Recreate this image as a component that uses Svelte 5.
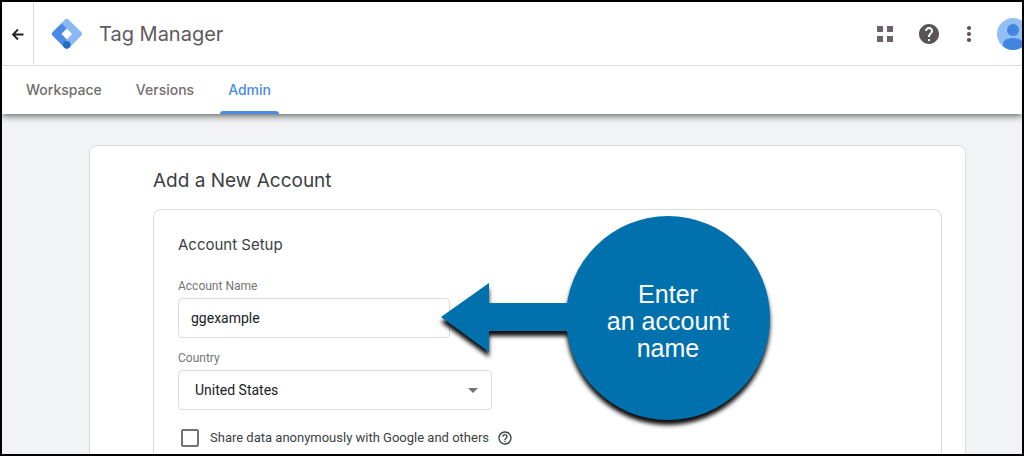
<script lang="ts">
  const tabs = ['Workspace', 'Versions', 'Admin'];
  const countries = ['United States', 'Canada', 'United Kingdom'];

  let activeTab = $state('Admin');
  let accountName = $state('ggexample');
  let country = $state('United States');
  let shareData = $state(false);
</script>

<div class="app">
  <header class="top-bar">
    <button class="back" aria-label="Back">
      <svg width="16" height="16" viewBox="0 0 16 16" fill="none" stroke="#202124" stroke-width="1.8">
        <path d="M13.5 8.5H3.5M8 3.5L3 8.5L8 13.5" />
      </svg>
    </button>
    <svg class="logo" width="32" height="32" viewBox="0 0 32 32" aria-hidden="true">
      <path fill="#4a8ae6" d="M13.6 2.2L1.9 13.8a3 3 0 0 0 0 4.3L13.6 29.8a3 3 0 0 0 4.3 0L29.6 18.1a3 3 0 0 0 0-4.3L17.9 2.2a3 3 0 0 0-4.3 0Z" />
      <path fill="#8ab8f2" d="M17.9 2.2L29.6 13.8a3 3 0 0 1 0 4.3L20 27.8L14.8 22.4L21.2 16L10.5 5.3L13.6 2.2a3 3 0 0 1 4.3 0Z" />
      <path fill="#fff" d="M15.8 10.6L21.2 16L15.8 21.4L10.4 16Z" />
      <circle cx="15.8" cy="26.8" r="3.8" fill="#246fc0" />
    </svg>
    <h1>Tag Manager</h1>
    <div class="actions">
      <button aria-label="Apps">
        <svg width="24" height="24" viewBox="0 0 24 24" fill="#6b6367">
          <path d="M4 4h6v6H4zM14 4h6v6h-6zM4 14h6v6H4zM14 14h6v6h-6z" />
        </svg>
      </button>
      <button class="help" aria-label="Help">
        <svg width="24" height="24" viewBox="0 0 24 24" fill="#5a5358">
          <path d="M12 2C6.48 2 2 6.48 2 12s4.48 10 10 10 10-4.48 10-10S17.52 2 12 2zm1 17h-2v-2h2v2zm2.07-7.75l-.9.92C13.45 12.9 13 13.5 13 15h-2v-.5c0-1.1.45-2.1 1.17-2.83l1.24-1.26c.37-.36.59-.86.59-1.41 0-1.1-.9-2-2-2s-2 .9-2 2H8c0-2.21 1.79-4 4-4s4 1.79 4 4c0 .88-.36 1.68-.93 2.25z" />
        </svg>
      </button>
      <button aria-label="More">
        <svg width="24" height="24" viewBox="0 0 24 24" fill="#5a5358">
          <circle cx="12" cy="6" r="2.1" />
          <circle cx="12" cy="12" r="2.1" />
          <circle cx="12" cy="18" r="2.1" />
        </svg>
      </button>
      <button class="avatar" aria-label="Account">
        <svg width="32" height="32" viewBox="0 0 32 32">
          <clipPath id="avatar-clip"><circle cx="16" cy="16" r="16" /></clipPath>
          <g clip-path="url(#avatar-clip)">
            <rect width="32" height="32" fill="#92bff4" />
            <circle cx="16" cy="12" r="6" fill="#4285e0" />
            <path fill="#4285e0" d="M6 32v-6c0-4 5-6 10-6s10 2 10 6v6z" />
          </g>
        </svg>
      </button>
    </div>
  </header>

  <nav class="tabs">
    {#each tabs as tab}
      <button class="tab" class:active={tab === activeTab} onclick={() => (activeTab = tab)}>{tab}</button>
    {/each}
  </nav>

  <main>
    <section class="card">
      <h2>Add a New Account</h2>
      <div class="panel">
        <h3>Account Setup</h3>

        <label class="field-label" for="account-name">Account Name</label>
        <div class="field">
          <input id="account-name" class="text-input" type="text" bind:value={accountName} />
          <div class="callout">
            <svg width="329" height="204" viewBox="0 0 329 204" fill="#0071ad" aria-hidden="true">
              <circle cx="227" cy="102" r="102" />
              <path d="M0 101L48 67V87H130V115H48V136Z" />
            </svg>
            <p>Enter<br />an account<br />name</p>
          </div>
        </div>

        <label class="field-label" for="country">Country</label>
        <div class="field select">
          <select id="country" bind:value={country}>
            {#each countries as name}
              <option value={name}>{name}</option>
            {/each}
          </select>
          <svg class="caret" width="10" height="5" viewBox="0 0 10 5" aria-hidden="true">
            <path fill="#757075" d="M0 0H10L5 5Z" />
          </svg>
        </div>

        <div class="share">
          <input id="share-data" type="checkbox" bind:checked={shareData} />
          <label for="share-data">Share data anonymously with Google and others</label>
          <svg width="16" height="16" viewBox="0 0 24 24" fill="#3c4043" aria-hidden="true">
            <path d="M11 18h2v-2h-2v2zm1-16C6.48 2 2 6.48 2 12s4.48 10 10 10 10-4.48 10-10S17.52 2 12 2zm0 18c-4.41 0-8-3.59-8-8s3.59-8 8-8 8 3.59 8 8-3.59 8-8 8zm0-14c-2.21 0-4 1.79-4 4h2c0-1.1.9-2 2-2s2 .9 2 2c0 2-3 1.75-3 5h2c0-2.25 3-2.5 3-5 0-2.21-1.79-4-4-4z" />
          </svg>
        </div>
      </div>
    </section>
  </main>
</div>

<style>
  :global(body) {
    background: #f1f3f4;
  }

  .app {
    box-sizing: border-box;
    height: 100vh;
    display: flex;
    flex-direction: column;
    overflow: hidden;
    border: 2px solid #000;
    background: #f1f3f4;
    color: #3c4043;
    font-family: Roboto, sans-serif;
  }

  button {
    padding: 0;
    border: none;
    background: none;
    cursor: pointer;
  }

  svg {
    display: block;
    flex-shrink: 0;
  }

  h1, h2, h3 {
    margin: 0;
    font-family: Inter, sans-serif;
    font-weight: 400;
  }

  /* Header */
  .top-bar {
    position: relative;
    z-index: 2;
    display: flex;
    align-items: center;
    flex-shrink: 0;
    height: 63px;
    border-bottom: 1px solid #dadce0;
    background: #fff;
  }

  .back {
    display: flex;
    align-items: center;
    justify-content: center;
    width: 32px;
    height: 100%;
    border-right: 1px solid #dadce0;
  }

  .logo {
    margin: 0 16px 0 17px;
  }

  h1 {
    color: #5f5a5f;
    font-size: 20px;
    line-height: 28px;
  }

  .actions {
    display: flex;
    align-items: center;
    gap: 16px;
    margin-left: auto;
    margin-right: -7px;
  }

  .help {
    margin-left: 4px;
  }

  /* Tabs */
  .tabs {
    position: relative;
    z-index: 1;
    display: flex;
    flex-shrink: 0;
    gap: 18px;
    height: 48px;
    padding: 0 16px;
    background: #fff;
    box-shadow: 0 2px 7px rgba(0, 0, 0, 0.6);
  }

  .tab {
    position: relative;
    padding: 0 8px;
    color: #736d6d;
    font: 500 14px/20px Inter, sans-serif;
  }

  .tab.active {
    color: #4a8be4;
  }

  .tab.active::after {
    content: "";
    position: absolute;
    right: 0;
    bottom: 0;
    left: 0;
    height: 3px;
    border-radius: 3px 3px 0 0;
    background: #4a8be4;
  }

  /* Content */
  main {
    flex: 1;
    min-height: 0;
    padding: 31px 56px 0 87px;
  }

  .card {
    min-height: 400px;
    padding: 22px 23px 0 63px;
    border: 1px solid #dadce0;
    border-radius: 8px;
    background: #fff;
  }

  h2 {
    font-size: 19px;
    line-height: 26px;
  }

  .panel {
    margin-top: 15px;
    padding: 24px;
    border: 1px solid #dadce0;
    border-radius: 8px;
  }

  h3 {
    margin-bottom: 22px;
    font-size: 15px;
    line-height: 22px;
  }

  .field-label {
    display: block;
    margin-bottom: 4px;
    color: #757575;
    font-size: 12px;
    line-height: 16px;
  }

  .field {
    position: relative;
    width: 272px;
    margin-bottom: 12px;
  }

  .field.select {
    width: 314px;
    margin-bottom: 17px;
  }

  .text-input, select {
    box-sizing: border-box;
    display: block;
    width: 100%;
    height: 40px;
    border: 1px solid #dadce0;
    border-radius: 4px;
    background: #fff;
    color: #202124;
    font: 14px Roboto, sans-serif;
  }

  .text-input {
    padding: 0 12px;
  }

  select {
    padding: 0 32px 0 16px;
    appearance: none;
  }

  .caret {
    position: absolute;
    top: 18px;
    right: 14px;
    pointer-events: none;
  }

  .share {
    display: flex;
    align-items: center;
    font-size: 13px;
    line-height: 22px;
  }

  .share input {
    box-sizing: border-box;
    width: 18px;
    height: 18px;
    margin: 0 11px 0 3px;
    border: 2px solid #757078;
    border-radius: 2px;
    appearance: none;
  }

  .share input:checked {
    background: #4a8be4;
  }

  .share label {
    margin-right: 8px;
  }

  /* Callout pointing at the account name */
  .callout {
    position: absolute;
    z-index: 1;
    top: -82px;
    left: 263px;
    width: 329px;
    height: 204px;
  }

  .callout svg {
    overflow: visible;
    filter: drop-shadow(0 5px 2px rgba(0, 0, 0, 0.95));
  }

  .callout p {
    position: absolute;
    inset: 6px 0 0 125px;
    display: flex;
    align-items: center;
    justify-content: center;
    margin: 0;
    color: #fff;
    font: 25px/27px "Liberation Sans", Arial, sans-serif;
    text-align: center;
  }
</style>
